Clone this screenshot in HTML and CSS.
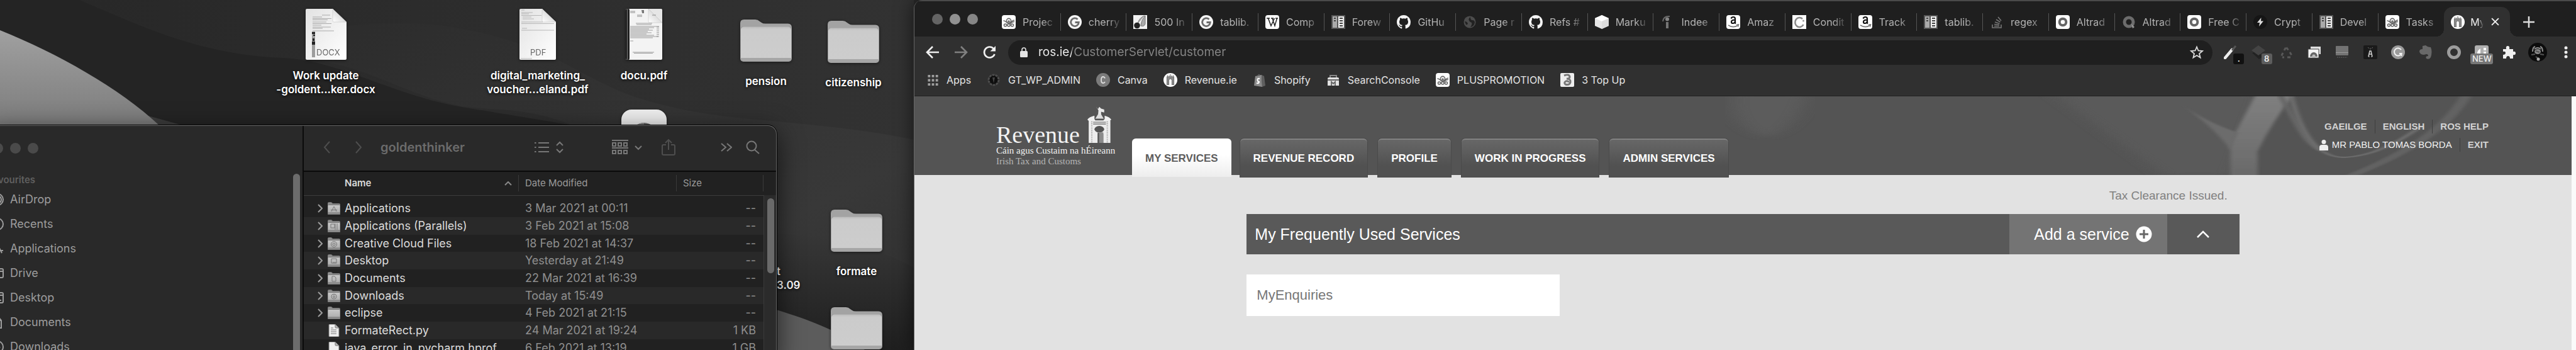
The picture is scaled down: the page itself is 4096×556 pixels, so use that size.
FILE: index.html
```
<!DOCTYPE html>
<html lang="en">
<head>
<meta charset="utf-8">
<title>My Services</title>
<link rel="stylesheet" href="styles.css">
</head>
<body>
<svg class="defs" aria-hidden="true">
  <defs>
    <linearGradient id="paper" x1="0" y1="0" x2="1" y2="1"><stop offset="0" stop-color="#e2e2e2"/><stop offset="1" stop-color="#fff"/></linearGradient>
    <linearGradient id="fold" x1="0" y1="1" x2="1" y2="0"><stop offset="0" stop-color="#fff"/><stop offset=".6" stop-color="#d8d8d8"/></linearGradient>
    <linearGradient id="front" x1="0" y1="0" x2="0" y2="1"><stop offset="0" stop-color="#bdbdbd"/><stop offset=".08" stop-color="#cbcbcb"/><stop offset="1" stop-color="#cdcdcd"/></linearGradient>
    <linearGradient id="mini" x1="0" y1="0" x2="0" y2="1"><stop offset="0" stop-color="#c9c9c9"/><stop offset="1" stop-color="#a9a9a9"/></linearGradient>
  </defs>
  <symbol id="folder" viewBox="0 0 82 68">
    <path d="M0 60V7Q0 1 6 1H24Q28 1 31 4L34 6Q36 7.500 40 7.500H76Q82 7.500 82 14V60Z" fill="#a3a3a3"/>
    <rect x="0" y="12" width="82" height="56" rx="5" fill="#9d9d9d"/>
    <rect x="1" y="12.500" width="80" height="54" rx="5" fill="url(#front)"/>
    <path d="M1 62H81Q81 67 76 67H6Q1 67 1 62Z" fill="#a6a6a6"/>
  </symbol>
  <symbol id="mini-folder" viewBox="0 0 20 19">
    <path d="M0 4V2Q0 0 2 0H6L8 2H18Q20 2 20 4V6H0Z" fill="#8d8d8d"/>
    <rect y="4" width="20" height="15" rx="1.500" fill="url(#mini)"/>
    <path d="M0 16.500H20V17.500Q20 19 18.500 19H1.500Q0 19 0 17.500Z" fill="#959595"/>
  </symbol>
  <symbol id="mini-file" viewBox="0 0 16 20"><path d="M0 1Q0 0 1 0H10L16 6V19Q16 20 15 20H1Q0 20 0 19Z" fill="#efefef"/><path d="M10 0L16 6H11Q10 6 10 5Z" fill="#b5b5b5"/></symbol>
  <symbol id="asana" viewBox="0 0 22 22"><rect width="22" height="22" rx="4" fill="#fff"/><g fill="none" stroke="#666" stroke-width="1.600"><circle cx="11" cy="9" r="3.600"/><circle cx="11" cy="10" r="1"/><path d="M2.500 9C7 8 8 15 12 13S16 8 20 8M13 14Q17 10 20 10.500"/><circle cx="5.500" cy="16" r="2"/><circle cx="11" cy="16" r="2"/><circle cx="16.500" cy="16" r="2"/></g></symbol>
  <symbol id="g" viewBox="0 0 22 22"><circle cx="11" cy="11" r="11" fill="#f6f6f6"/><path d="M15.500 6.800A6.300 6.300 0 1 0 17.300 11.500H11.500" fill="none" stroke="#6b6b6b" stroke-width="2.800"/></symbol>
  <symbol id="cherry" viewBox="0 0 22 22"><rect width="22" height="22" fill="#f2f2f2"/><path d="M18 1C12 3 8 8 7 14M19 1Q12 9 12 17Q17 19 19 14Z" fill="#aaa" stroke="#777"/><circle cx="6" cy="16.500" r="4.800" fill="#222"/></symbol>
  <symbol id="wiki" viewBox="0 0 22 22"><rect width="22" height="22" rx="4" fill="#fff"/><path d="M2 5H7M9 5H13M16 5H20M4.500 5L9 17L14.500 5M11 5L15 17L18.500 5" fill="none" stroke="#222" stroke-width="1.500"/></symbol>
  <symbol id="docs" viewBox="0 0 22 22"><rect width="22" height="22" fill="#555"/><rect x="2" y="2" width="7" height="18" fill="#aaa"/><rect x="11" y="2" width="9" height="18" fill="#eee"/><path d="M4 5h3M4 9h3M13 5h5M13 9h5M13 13h5M13 17h5" stroke="#444" stroke-width="2"/></symbol>
  <symbol id="github" viewBox="0 0 16 16"><path fill="#f4f4f4" d="M8 0C3.580 0 0 3.580 0 8c0 3.540 2.290 6.530 5.470 7.590.4.070.55-.17.55-.38 0-.19-.01-.82-.01-1.490-2.010.37-2.530-.49-2.690-.94-.09-.23-.48-.94-.82-1.130-.28-.15-.68-.52-.01-.53.63-.01 1.080.58 1.230.82.72 1.210 1.870.87 2.330.66.07-.52.28-.87.51-1.070-1.780-.2-3.640-.89-3.640-3.950 0-.87.31-1.590.82-2.150-.08-.2-.36-1.020.08-2.120 0 0 .67-.21 2.200.82a7.600 7.600 0 0 1 4 0c1.530-1.040 2.200-.82 2.200-.82.44 1.100.16 1.920.08 2.120.51.56.82 1.270.82 2.150 0 3.070-1.870 3.750-3.650 3.950.29.25.54.73.54 1.480 0 1.070-.01 1.930-.01 2.200 0 .21.15.46.55.38A8 8 0 0 0 16 8c0-4.420-3.580-8-8-8z"/></symbol>
  <symbol id="globe" viewBox="0 0 22 22"><circle cx="11" cy="11" r="9.500" fill="#4c4c4c"/><path d="M12 3Q8 6 10 9T14 12Q15 15 12 19Q18 18 19 12Q19 8 15 8Q12 8 12 3ZM3 10Q7 10 8 14Q6 16 5 15Z" fill="#222"/></symbol>
  <symbol id="cube" viewBox="0 0 22 22"><path d="M11 0L22 5V17L11 22L0 17V5Z" fill="#e6e6e6"/><path d="M11 0L22 5L11 10L0 5Z" fill="#fff"/><path d="M11 10V22L22 17V5Z" fill="#dcdcdc"/></symbol>
  <symbol id="indeed" viewBox="0 0 22 22"><path d="M4 10Q5 1 15 2" fill="none" stroke="#6a6a6a" stroke-width="2"/><circle cx="11" cy="6.500" r="3" fill="#858585"/><path d="M11 11V21" stroke="#757575" stroke-width="4"/></symbol>
  <symbol id="amazon" viewBox="0 0 22 22"><rect width="22" height="22" rx="4" fill="#fff"/><path d="M7.500 5.500Q8.500 3 11 3Q14 3 14 6V11.500Q14 13 15 13.500M14 7.500Q8 7.500 8 10.700Q8 13 10.300 13Q14 13 14 9" fill="none" stroke="#111" stroke-width="2.200"/><path d="M3 16Q11 21 18 16.500M16 15.500L19.500 15L18.500 18.500" fill="none" stroke="#777" stroke-width="1.600"/></symbol>
  <symbol id="cring" viewBox="0 0 22 22"><rect width="22" height="22" fill="#fff"/><path d="M16 6A7 7.500 0 1 0 17.500 15" fill="none" stroke="#8a8a8a" stroke-width="2.600"/><circle cx="17.500" cy="9" r="1.500" fill="#999"/></symbol>
  <symbol id="stack" viewBox="0 0 22 22"><path d="M4 15V20H18V15M7 17.500H15M7 14.500L15 15.500M8 11L15.500 13.500M10 7L16.500 11M13 3L18 9" fill="none" stroke="#777" stroke-width="1.600"/></symbol>
  <symbol id="ring-box" viewBox="0 0 22 22"><rect width="22" height="22" rx="4" fill="#fff"/><circle cx="11" cy="11" r="5.300" fill="none" stroke="#666" stroke-width="4"/></symbol>
  <symbol id="ring-dark" viewBox="0 0 22 22"><circle cx="11" cy="11" r="7" fill="none" stroke="#6c6c6c" stroke-width="5"/><path d="M15 14L20 19L17 21Z" fill="#999"/></symbol>
  <symbol id="bolt" viewBox="0 0 22 22"><circle cx="11" cy="11" r="11" fill="#151515"/><path d="M12.500 4L6 12H10L9 18L16 9.500H12Z" fill="#ddd"/></symbol>
  <symbol id="rev" viewBox="0 0 22 22"><circle cx="11" cy="11" r="11" fill="#fff"/><path d="M5.500 18.500V6H16.500V18.500H13.500V11Q11 7 8.500 11V18.500ZM6.500 3.500V6M9 4V6M11 2V6M13 4V6M15.500 3.500V6" fill="#8a8a8a" stroke="#777" stroke-width="1.200"/></symbol>
</svg>

<div class="desktop">
  <svg class="wallpaper" viewBox="0 0 1453 556" preserveAspectRatio="none" aria-hidden="true">
    <defs>
      <linearGradient id="hill" x1="0" y1="0" x2="0" y2="1"><stop offset="0" stop-color="#a0a0a0"/><stop offset="1" stop-color="#7c7c7c"/></linearGradient>
      <linearGradient id="band" x1="0" y1="0" x2="1" y2="1"><stop offset="0" stop-color="#2c2c2c"/><stop offset=".7" stop-color="#383838"/><stop offset="1" stop-color="#2e2e2e"/></linearGradient>
      <linearGradient id="low" x1="0" y1="0" x2="0" y2="1"><stop offset="0" stop-color="#373737"/><stop offset="1" stop-color="#1f1f1f"/></linearGradient>
      <linearGradient id="base" x1="0" y1="0" x2="1" y2="0"><stop offset="0" stop-color="#272727"/><stop offset="1" stop-color="#323232"/></linearGradient>
    </defs>
    <rect width="1453" height="556" fill="url(#base)"/>
    <path d="M126 0C220 40 320 88 450 92C540 96 620 150 734 170L910 199H0V0Z" fill="#242424"/>
    <path d="M490 50C590 32 680 34 734 46C900 75 930 140 1060 168C1160 195 1300 190 1453 222V556H1100L910 199C840 170 790 176 734 169C640 150 580 100 480 94Z" fill="url(#band)"/>
    <path d="M1234 370C1330 378 1400 396 1453 425V556H1234Z" fill="url(#low)"/>
    <path d="M1234 492C1300 512 1340 530 1375 556H1234Z" fill="#5c5c5c"/>
    <path d="M236 184L290 199H236Z" fill="#3c3c3c"/>
    <path d="M0 48C90 84 190 140 253 199H0Z" fill="url(#hill)"/>
  </svg>

  <figure class="item docx">
    <svg width="65" height="81" viewBox="0 0 65 81" role="img" aria-label="Word document">
      <path d="M0 2Q0 0 2 0H43L65 21V79Q65 81 63 81H2Q0 81 0 79Z" fill="url(#paper)"/>
      <path d="M43 0L65 21H45Q43 21 43 19Z" fill="url(#fold)" stroke="#bbb" stroke-width=".5"/>
      <path d="M26 10h13M11 13h15M11 15.500h30M11 17.500h24M11 21h22M11 23.500h30M11 26h14M11 29h29M11 31h16M11 35h34" stroke="#999" stroke-width=".8"/>
      <rect x="10" y="36" width="5" height="41" fill="#9d9d9d"/><path d="M10 37h5v3h-5zM12 41h3v2h-3zM11 47h3v4h-3zM10 52h5v5h-5z" fill="#222"/>
      <text x="17" y="74" class="doc-type">DOCX</text>
    </svg>
    <figcaption>Work update<br>-goldent...ker.docx</figcaption>
  </figure>
  <figure class="item marketing">
    <svg width="58" height="81" viewBox="0 0 58 81" role="img" aria-label="PDF document">
      <path d="M0 2Q0 0 2 0H36L58 21V79Q58 81 56 81H2Q0 81 0 79Z" fill="url(#paper)"/>
      <path d="M36 0L58 21H38Q36 21 36 19Z" fill="url(#fold)" stroke="#bbb" stroke-width=".5"/>
      <path d="M3 2h5M3 6h18M3 8h12M3 10.500h32M5 13h14M5 16h18M3 21h34M3 23.500h52M4 31h8M3 34h52M2 79h18" stroke="#aaa" stroke-width=".8"/>
      <text x="17" y="74" class="doc-type">PDF</text>
    </svg>
    <figcaption>digital_marketing_<br>voucher...eland.pdf</figcaption>
  </figure>
  <figure class="item docu">
    <svg width="58" height="81" viewBox="0 0 58 81" role="img" aria-label="PDF document">
      <rect width="58" height="81" rx="2" fill="#f3f3f3"/><rect width="6" height="81" rx="2" fill="#222"/><rect x="2" width="1" height="81" fill="#777"/>
      <path d="M36 0H56L58 2V22L44 22Q36 22 36 19Z" fill="#e6e6e6"/><path d="M36 0L58 22H38Q36 22 36 20Z" fill="url(#fold)" stroke="#bbb" stroke-width=".5"/>
      <path d="M25 2h4v5h-3z" fill="#777"/><path d="M16 23h26M17 25h24M7 28h46M7 30h38M7 32h30M7 34h36M7 36h28M7 38h34M7 40h26M7 42h38M7 44h44M7 46h36M7 51h5M11 69h34M13 70.500h30" stroke="#888" stroke-width=".8"/>
      <path d="M49 29h4M49 32h4M49 35h4M49 38h4M49 41h4M49 44h4M7 4h8M7 6h8M18 10h8M18 12h8M42 10h6" stroke="#777" stroke-width=".8"/>
    </svg>
    <figcaption>docu.pdf</figcaption>
  </figure>
  <div class="item app">
    <svg width="72" height="80" viewBox="0 0 72 80" role="img" aria-label="Application"><rect width="72" height="80" rx="16" fill="#efefef"/><circle cx="36" cy="41" r="20" fill="#6a6a6a"/><path d="M36 21A20 20 0 0 0 36 61Z" fill="#8f8f8f"/></svg>
  </div>
  <figure class="item pension"><svg width="82" height="68" aria-hidden="true"><use href="#folder"/></svg><figcaption>pension</figcaption></figure>
  <figure class="item citizenship"><svg width="82" height="68" aria-hidden="true"><use href="#folder"/></svg><figcaption>citizenship</figcaption></figure>
  <figure class="item formate"><svg width="82" height="68" aria-hidden="true"><use href="#folder"/></svg><figcaption>formate</figcaption></figure>
  <figure class="item last"><svg width="82" height="68" aria-hidden="true"><use href="#folder"/></svg></figure>
  <p class="item covered">t<br>3.09</p>
</div>

<section class="finder" aria-label="Finder">
  <aside class="sidebar">
    <div class="side-main">
      <div class="lights"><i></i><i></i><i></i></div>
      <h2>Favourites</h2>
      <ul>
        <li><svg viewBox="0 0 20 20"><circle cx="10" cy="10" r="9"/><circle cx="10" cy="10" r="6"/><circle cx="10" cy="10" r="3"/></svg><a href="#">AirDrop</a></li>
        <li><svg viewBox="0 0 20 20"><circle cx="10" cy="10" r="9"/><path d="M10 4V10H6"/></svg><a href="#">Recents</a></li>
        <li><svg viewBox="0 0 20 20"><path d="M3 17L10 3L17 17M1 13H19"/></svg><a href="#">Applications</a></li>
        <li><svg viewBox="0 0 20 20"><rect x="2" y="3" width="17" height="14" rx="2"/><path d="M2 7H19"/></svg><a href="#">Drive</a></li>
        <li><svg viewBox="0 0 20 20"><rect x="1" y="2" width="18" height="16" rx="2"/><path d="M2 6H19M5 14H16"/></svg><a href="#">Desktop</a></li>
        <li><svg viewBox="0 0 20 20"><path d="M3 1H11L16 7V19H3ZM11 1V7H16"/></svg><a href="#">Documents</a></li>
        <li><svg viewBox="0 0 20 20"><circle cx="10" cy="10" r="9"/><path d="M10 5V14M6 10L10 14L14 10"/></svg><a href="#">Downloads</a></li>
      </ul>
    </div>
    <div class="side-scroll"></div>
  </aside>
  <div class="files">
    <header class="finder-bar">
      <button class="back" aria-label="Back"><svg width="12" height="20" viewBox="0 0 12 20"><path d="M10 1L2 10L10 19"/></svg></button>
      <button class="forward" aria-label="Forward"><svg width="12" height="20" viewBox="0 0 12 20"><path d="M2 1L10 10L2 19"/></svg></button>
      <h1>goldenthinker</h1>
      <button class="view" aria-label="View as list"><svg width="46" height="20" viewBox="0 0 46 20"><path d="M6 3H23M6 10H23M6 17H23M0 3H2.500M0 10H2.500M0 17H2.500M35 7L40 2L45 7M35 13L40 18L45 13"/></svg></button>
      <button class="group" aria-label="Group"><svg width="48" height="24" viewBox="0 0 48 24"><path d="M0 1H26M0 13H26M1 5h5v5h-5zM10 5h5v5h-5zM19 5h5v5h-5zM1 17h5v5h-5zM10 17h5v5h-5zM19 17h5v5h-5zM37 10L42 15L47 10"/></svg></button>
      <button class="share" aria-label="Share"><svg width="22" height="26" viewBox="0 0 22 26"><path d="M7 9H3Q1 9 1 11V23Q1 25 3 25H19Q21 25 21 23V11Q21 9 19 9H15M11 17V1M6 6L11 1L16 6"/></svg></button>
      <button class="more" aria-label="More"><svg width="18" height="14" viewBox="0 0 18 14"><path d="M1 1L8 7L1 13M10 1L17 7L10 13"/></svg></button>
      <button class="find" aria-label="Search"><svg width="22" height="22" viewBox="0 0 22 22"><circle cx="9" cy="9" r="7.500"/><path d="M14 15L21 21"/></svg></button>
    </header>
    <div class="list">
      <table>
        <colgroup><col class="c-name"><col class="c-date"><col class="c-size"></colgroup>
        <thead><tr><th scope="col"><span class="sort">Name<svg width="12" height="7" viewBox="0 0 12 7"><path d="M1 6L6 1L11 6"/></svg></span></th><th scope="col">Date Modified</th><th scope="col">Size</th></tr></thead>
        <tbody>
          <tr><td><span class="entry"><svg class="tri"><use href="#tri"/></svg><svg class="ico"><use href="#mini-folder"/><path d="M6 15L10 7L14 15M5 12.500H15"/></svg>Applications</span></td><td>3 Mar 2021 at 00:11</td><td>--</td></tr>
          <tr><td><span class="entry"><svg class="tri"><use href="#tri"/></svg><svg class="ico"><use href="#mini-folder"/><path d="M5 7H11V13H5ZM12 6V16M15 6V16"/></svg>Applications (Parallels)</span></td><td>3 Feb 2021 at 15:08</td><td>--</td></tr>
          <tr><td><span class="entry"><svg class="tri"><use href="#tri"/></svg><svg class="ico"><use href="#mini-folder"/><circle cx="10" cy="11" r="4.500"/><circle cx="10" cy="11" r="2"/></svg>Creative Cloud Files</span></td><td>18 Feb 2021 at 14:37</td><td>--</td></tr>
          <tr><td><span class="entry"><svg class="tri"><use href="#tri"/></svg><svg class="ico"><use href="#mini-folder"/><path d="M6 7H14V14H6ZM8 13H13"/></svg>Desktop</span></td><td>Yesterday at 21:49</td><td>--</td></tr>
          <tr><td><span class="entry"><svg class="tri"><use href="#tri"/></svg><svg class="ico"><use href="#mini-folder"/><path d="M7 7H11L13 9V15H7Z"/></svg>Documents</span></td><td>22 Mar 2021 at 16:39</td><td>--</td></tr>
          <tr><td><span class="entry"><svg class="tri"><use href="#tri"/></svg><svg class="ico"><use href="#mini-folder"/><circle cx="10" cy="11" r="4"/><path d="M10 8V13M8 11L10 13L12 11"/></svg>Downloads</span></td><td>Today at 15:49</td><td>--</td></tr>
          <tr><td><span class="entry"><svg class="tri"><use href="#tri"/></svg><svg class="ico"><use href="#mini-folder"/></svg>eclipse</span></td><td>4 Feb 2021 at 21:15</td><td>--</td></tr>
          <tr><td><span class="entry"><svg class="tri"></svg><svg class="ico"><use href="#mini-file"/><path d="M5 6H9M5 9H14M5 12H14M5 15H14"/></svg>FormateRect.py</span></td><td>24 Mar 2021 at 19:24</td><td>1 KB</td></tr>
          <tr><td><span class="entry"><svg class="tri"></svg><svg class="ico"><use href="#mini-file"/></svg>java_error_in_pycharm.hprof</span></td><td>6 Feb 2021 at 13:19</td><td>1 GB</td></tr>
        </tbody>
      </table>
      <div class="track"><div class="thumb"></div></div>
    </div>
  </div>
  <svg class="defs" aria-hidden="true"><symbol id="tri" viewBox="0 0 8 14"><path d="M1 1L7 7L1 13" fill="none" stroke="#9a9a9a" stroke-width="2"/></symbol></svg>
</section>

<section class="browser" aria-label="Browser">
  <div class="tabstrip">
    <div class="lights"><i></i><i></i><i></i></div>
    <div class="tabs">
      <button class="tab"><svg><use href="#asana"/></svg><span>Projec</span></button>
      <button class="tab"><svg><use href="#g"/></svg><span>cherry</span></button>
      <button class="tab"><svg><use href="#cherry"/></svg><span>500 In</span></button>
      <button class="tab"><svg><use href="#g"/></svg><span>tablib.</span></button>
      <button class="tab"><svg><use href="#wiki"/></svg><span>Comp</span></button>
      <button class="tab"><svg><use href="#docs"/></svg><span>Forew</span></button>
      <button class="tab"><svg><use href="#github"/></svg><span>GitHu</span></button>
      <button class="tab"><svg><use href="#globe"/></svg><span>Page r</span></button>
      <button class="tab"><svg><use href="#github"/></svg><span>Refs #</span></button>
      <button class="tab"><svg><use href="#cube"/></svg><span>Marku</span></button>
      <button class="tab"><svg><use href="#indeed"/></svg><span>Indee</span></button>
      <button class="tab"><svg><use href="#amazon"/></svg><span>Amaz</span></button>
      <button class="tab"><svg><use href="#cring"/></svg><span>Condit</span></button>
      <button class="tab"><svg><use href="#amazon"/></svg><span>Track</span></button>
      <button class="tab"><svg><use href="#docs"/></svg><span>tablib.</span></button>
      <button class="tab"><svg><use href="#stack"/></svg><span>regex</span></button>
      <button class="tab"><svg><use href="#ring-box"/></svg><span>Altrad</span></button>
      <button class="tab"><svg><use href="#ring-dark"/></svg><span>Altrad</span></button>
      <button class="tab"><svg><use href="#ring-box"/></svg><span>Free C</span></button>
      <button class="tab"><svg><use href="#bolt"/></svg><span>Crypt</span></button>
      <button class="tab"><svg><use href="#docs"/></svg><span>Devel</span></button>
      <button class="tab"><svg><use href="#asana"/></svg><span>Tasks</span></button>
      <button class="tab active"><svg><use href="#rev"/></svg><span>My</span><svg class="close" viewBox="0 0 22 22"><path d="M4 4L18 18M18 4L4 18" stroke="#eee" stroke-width="2.500"/></svg></button>
    </div>
    <button class="new-tab" aria-label="New tab"><svg width="18" height="18" viewBox="0 0 18 18"><path d="M9 0V18M0 9H18" stroke="#ddd" stroke-width="2.500"/></svg></button>
  </div>

  <div class="toolbar">
    <div class="nav-buttons">
      <button aria-label="Back"><svg viewBox="0 0 22 22"><path d="M21 11H3M11 2L2 11L11 20" stroke="#f0f0f0" stroke-width="2.600" fill="none"/></svg></button>
      <button aria-label="Forward"><svg viewBox="0 0 22 22"><path d="M1 11H19M11 2L20 11L11 20" stroke="#808080" stroke-width="2.600" fill="none"/></svg></button>
      <button aria-label="Reload"><svg viewBox="0 0 22 22"><path d="M18 5.500A8.500 8.500 0 1 0 19.500 14" stroke="#f0f0f0" stroke-width="2.600" fill="none"/><path d="M21 1V9.500H12.500Z" fill="#f0f0f0"/></svg></button>
    </div>
    <div class="omnibox">
      <svg class="lock" width="12" height="16" viewBox="0 0 12 16" aria-hidden="true"><rect y="6" width="12" height="10" rx="1.500" fill="#e4e4e4"/><path d="M3 7V4Q3 1 6 1T9 4V7" fill="none" stroke="#e4e4e4" stroke-width="1.600"/></svg>
      <input type="text" aria-label="Address" value="ros.ie/CustomerServlet/customer">
      <button aria-label="Bookmark this page"><svg width="22" height="22" viewBox="0 0 22 22"><path d="M11 2.500L13.500 8.500L20 9L15 13.300L16.600 19.500L11 16L5.400 19.500L7 13.300L2 9L8.500 8.500Z" fill="none" stroke="#ddd" stroke-width="1.800"/></svg></button>
    </div>
    <div class="extensions">
      <button aria-label="Colour picker"><svg viewBox="0 0 22 22"><path d="M2 20L13 7" stroke="#eee" stroke-width="4.500" stroke-linecap="round"/><path d="M13 8L19 1" stroke="#555" stroke-width="3"/></svg><b class="dot">.</b></button>
      <button aria-label="Layers"><svg viewBox="0 0 22 22"><path d="M1 12L9 9L18 18L12 22Z" fill="#222"/><path d="M11 0L22 8L11 16L0 8Z" fill="#444"/></svg><b class="count">8</b></button>
      <button aria-label="Recycle"><svg viewBox="0 0 22 22"><path d="M7 8L10 3L14 8M16 11L19 16M5 12L2 18M7 19H4M12 19H17" stroke="#585858" stroke-width="3" stroke-dasharray="5 1.500" fill="none"/></svg></button>
      <button aria-label="Screenshots"><svg viewBox="0 0 22 22"><path d="M5 2H21V14H5Z" fill="#ddd"/><path d="M1 6H18V20H1Z" fill="#f4f4f4" stroke="#444"/><path d="M4 18A6 7 0 0 1 16 18Z" fill="#666"/><circle cx="10" cy="17" r="2.500" fill="#bbb"/></svg></button>
      <button aria-label="Analytics"><svg viewBox="0 0 22 22"><rect x="1" y="1" width="20" height="15" rx="1" fill="#737373"/><path d="M1 11.500H21" stroke="#999"/><path d="M3 19H19" stroke="#4a4a4a" stroke-width="2" stroke-dasharray="2 1"/></svg></button>
      <button aria-label="Tower"><svg viewBox="0 0 22 22"><rect width="22" height="22" rx="2" fill="#1a1a1a"/><path d="M8 18L10 9H12L14 18M8 18H9.500M12.500 18H14M9 14H13" stroke="#ccc" stroke-width="1.600" fill="none"/><path d="M7 3L9 5M15 3L13 5M11 4V7" stroke="#666"/></svg></button>
      <button aria-label="Grammar"><svg viewBox="0 0 22 22"><circle cx="11" cy="11" r="11" fill="#9b9b9b"/><path d="M16 7A6 6 0 1 0 16.500 13H13M16.500 13V17" fill="none" stroke="#f2f2f2" stroke-width="2"/></svg></button>
      <button aria-label="Notes"><svg viewBox="0 0 22 22"><path d="M6 1L11 0Q14 3 19 3Q22 10 19 19Q17 23 12 21Q10 17 15 17Q15 14 12 14Q3 17 1 10Q1 6 6 6Z" fill="#686868"/></svg></button>
      <button aria-label="Ring"><svg viewBox="0 0 22 22"><circle cx="11" cy="11" r="8.500" fill="none" stroke="#9c9c9c" stroke-width="5"/></svg></button>
      <button aria-label="New feature"><svg viewBox="0 0 22 22"><rect width="22" height="22" rx="3" fill="#b0b0b0"/><path d="M9 3V14M4 13Q4 8 9 5V14ZM14 4H18V8H14ZM14 10H18V14H14Z" fill="#fff"/></svg><b class="new">NEW</b></button>
      <button aria-label="Extensions"><svg viewBox="0 0 22 22"><path d="M1 6H6Q5 1 8.500 1T11 6H17V10Q21 9 21 12.500T17 15V21H12Q12 17 9 17T6 21H1V15Q5 15 5 12T1 10Z" fill="#f0f0f0"/></svg></button>
      <button class="avatar" aria-label="Profile"><svg viewBox="0 0 30 30"><circle cx="15" cy="15" r="15" fill="#0c0c0c"/><path d="M7 14Q7 7 11 6M23 14Q23 7 19 6M10 10Q15 6 20 10" fill="none" stroke="#8e8e8e" stroke-width="2"/><ellipse cx="15" cy="14" rx="5" ry="4" fill="#8a8a8a"/><path d="M12 13L18 15M5 19L11 18M25 19L19 18M12 22L18 26" stroke="#555" stroke-width="2"/><circle cx="16" cy="26" r="2.500" fill="#aaa"/></svg></button>
    </div>
    <button class="menu" aria-label="Menu"><svg width="6" height="20" viewBox="0 0 6 20"><g fill="#eee"><circle cx="3" cy="3" r="2.500"/><circle cx="3" cy="10" r="2.500"/><circle cx="3" cy="17" r="2.500"/></g></svg></button>
  </div>

  <nav class="bookmarks" aria-label="Bookmarks">
    <a class="apps" href="#"><svg viewBox="0 0 18 20"><path d="M2.500 1V19M9 1V19M15.500 1V19" stroke="#a0a0a0" stroke-width="4" stroke-dasharray="4 3"/></svg>Apps</a>
    <a href="#"><svg viewBox="0 0 22 22"><circle cx="11" cy="11" r="8" fill="#0e0e0e" stroke="#4c4c4c" stroke-width="3" stroke-dasharray="4 1"/><path d="M9 7H13L11 16Z" fill="#444"/></svg>GT_WP_ADMIN</a>
    <a href="#"><svg viewBox="0 0 22 22"><circle cx="11" cy="11" r="11" fill="#7b7b7b"/><path d="M14 8.500Q13 6 11 6Q8 6 8 11T11 16Q13 16 14 14" fill="none" stroke="#ddd" stroke-width="1.800"/></svg>Canva</a>
    <a href="#"><svg><use href="#rev"/></svg>Revenue.ie</a>
    <a href="#"><svg viewBox="0 0 22 22"><path d="M4 5L14 3L15 22L2 20Z" fill="#8a8a8a"/><path d="M14 3L18 5L20 20L15 22Z" fill="#5f5f5f"/><path d="M7 6Q9 0 12 4" fill="none" stroke="#777"/><path d="M11 9Q7 8 7.500 11T10 14Q10 17 6 16" fill="none" stroke="#fff" stroke-width="2"/></svg>Shopify</a>
    <a href="#"><svg viewBox="0 0 22 22"><path d="M6 7V4H16V7" fill="none" stroke="#888" stroke-width="2"/><path d="M2 9Q2 7 4 7H18Q20 7 20 9V20H2Z" fill="#e2e2e2"/><path d="M2 11H20M8 20V14L11 17L14 14V20" stroke="#666" stroke-width="1.800" fill="none"/></svg>SearchConsole</a>
    <a href="#"><svg><use href="#asana"/></svg>PLUSPROMOTION</a>
    <a href="#"><svg viewBox="0 0 22 22"><rect width="22" height="22" rx="2" fill="#eee"/><path d="M6 4Q14 1 15 6Q15 9 10 9Q17 9 16 15Q14 20 8 18Q5 15 9 13Q13 12 13 15" fill="none" stroke="#777" stroke-width="3"/></svg>3 Top Up</a>
  </nav>

  <div class="page">
    <header class="site-head">
      <svg class="waves" viewBox="0 20 1563 541" preserveAspectRatio="none" aria-hidden="true">
        <defs><filter id="soft"><feGaussianBlur stdDeviation="14"/></filter><filter id="fine"><feGaussianBlur stdDeviation="3"/></filter>
        <linearGradient id="trunk" x1="0" y1="0" x2="0" y2="1"><stop offset="0" stop-color="#808080"/><stop offset="1" stop-color="#6a6a6a"/></linearGradient></defs>
        <path d="M200 0H320Q300 260 250 300Q190 200 200 0Z" fill="#5b5b5b" filter="url(#soft)"/>
        <path d="M720 0H1060L1010 561H900Z" fill="#5a5a5a" filter="url(#soft)"/>
        <path d="M1050 0H1112Q1075 200 1052 400V561H1008V400Q1005 330 1020 240Z" fill="url(#trunk)" filter="url(#fine)"/>
        <path d="M930 80Q965 190 1020 270L1008 390Q985 250 930 80Z" fill="#6c6c6c" filter="url(#fine)"/>
        <path d="M1090 20C1115 200 1125 330 1155 395" fill="none" stroke="#666" stroke-width="9" filter="url(#fine)"/>
        <path d="M1106 10C1118 200 1140 440 1193 440C1250 430 1290 300 1318 230" fill="none" stroke="#6f6f6f" stroke-width="8" filter="url(#fine)"/>
        <path d="M1202 570C1270 450 1350 300 1392 10" fill="none" stroke="#626262" stroke-width="18" filter="url(#fine)"/>
      </svg>
      <a class="logo" href="#" aria-label="Revenue">
        <span class="logo-top"><span class="word">Revenue</span>
        <svg width="38" height="58" viewBox="0 0 54 83" preserveAspectRatio="none" aria-hidden="true">
          <path d="M20 1L24 6L27 1L31 5L38 7V14L31 12L31 21H24L25 9Z" fill="#e8e8e8"/>
          <path d="M24 18H31L37 28H18Z" fill="#ddd"/><path d="M0 30Q4 24 16 21V29L18 32H36L39 29V21Q50 24 54 30L50 34H4Z" fill="#f0f0f0"/>
          <path d="M3 33H52V83H36V62H23V83H3Z" fill="#ececec"/><ellipse cx="27" cy="52" rx="11" ry="7.500" fill="#545454"/>
          <path d="M13 36H42M13 40H42" stroke="#777" stroke-width="2"/><path d="M10 34V83M45 34V83" stroke="#aaa" stroke-dasharray="2 2" stroke-width="3"/>
          <path d="M23 59V83H36V59Z" fill="#8a8a8a"/><path d="M25 60V83" stroke="#545454" stroke-width="3"/>
        </svg></span>
        <span class="irish">Cáin agus Custaim na hÉireann</span>
        <span class="english">Irish Tax and Customs</span>
      </a>
      <nav class="main-nav" aria-label="Main">
        <a class="current" href="#">MY SERVICES</a><a href="#">REVENUE RECORD</a><a href="#">PROFILE</a><a href="#">WORK IN PROGRESS</a><a href="#">ADMIN SERVICES</a>
      </nav>
      <div class="account">
        <div class="links"><a href="#">GAEILGE</a><a href="#">ENGLISH</a><a href="#">ROS HELP</a></div>
        <div class="links"><span class="user"><svg width="14" height="17" viewBox="0 0 14 17" aria-hidden="true"><circle cx="7" cy="3.500" r="3.500" fill="#eee"/><path d="M0 17V12Q0 8 4 8H10Q14 8 14 12V17Z" fill="#eee"/></svg>MR PABLO TOMAS BORDA</span><a href="#">EXIT</a></div>
      </div>
    </header>
    <main>
      <p class="notice">Tax Clearance Issued.</p>
      <div class="service-bar">
        <h2>My Frequently Used Services</h2>
        <button class="add">Add a service <svg width="26" height="26" viewBox="0 0 26 26" aria-hidden="true"><circle cx="13" cy="13" r="12.500" fill="#fff"/><path d="M13 6V20M6 13H20" stroke="#666" stroke-width="3"/></svg></button>
        <button class="fold" aria-label="Collapse"><svg width="20" height="12" viewBox="0 0 20 12"><path d="M1 11L10 2L19 11" fill="none" stroke="#fff" stroke-width="2.500"/></svg></button>
      </div>
      <a class="card" href="#">MyEnquiries</a>
    </main>
  </div>
</section>
</body>
</html>
```
FILE: styles.css
```
* { box-sizing: border-box; }
body { margin: 0; height: 100vh; overflow: hidden; position: relative; background: #2a2a2a; font-family: Inter, "Liberation Sans", sans-serif; }
button { border: 0; padding: 0; background: none; color: inherit; font: inherit; display: flex; align-items: center; justify-content: center; }
a { color: inherit; text-decoration: none; }
h1, h2, p, ul, figure { margin: 0; padding: 0; }
.defs { position: absolute; width: 0; height: 0; }

/* desktop */
.desktop { position: absolute; inset: 0; }
.wallpaper { position: absolute; left: 0; top: 0; width: 1453px; height: 100%; }
.item { position: absolute; width: 180px; display: flex; flex-direction: column; align-items: center; gap: 20px; color: #fff; font-size: 17px; font-weight: 600; line-height: 22px; text-align: center; text-shadow: 0 1px 4px #000; }
.item svg { display: block; filter: drop-shadow(0 1px 2px #0008); }
.doc-type { font-size: 13px; font-weight: 400; fill: #666; text-shadow: none; }
.docx, .marketing, .docu { top: 14px; gap: 14px; }
.docx { left: 428px; }
.marketing { left: 765px; }
.docu { left: 934px; }
.app { left: 934px; top: 174px; }
.pension { left: 1128px; top: 30px; }
.citizenship { left: 1267px; top: 32px; }
.formate { left: 1272px; top: 332px; }
.last { left: 1272px; top: 487px; }
.covered { left: 1235px; top: 420px; width: auto; display: block; text-align: left; }

/* finder */
.finder { position: absolute; left: -20px; top: 199px; bottom: -20px; width: 1255px; display: flex; overflow: hidden; background: #292929; border-top: 1px solid #6a6a6a; border-right: 1px solid #6a6a6a; border-radius: 0 14px 0 0; box-shadow: 0 0 0 1px #000, 0 10px 40px #000a; }
.sidebar { flex: none; width: 503px; display: flex; justify-content: space-between; color: #9d9d9d; border-right: 2px solid #0a0a0a; }
.lights { display: flex; }
.finder .lights { gap: 11px; padding: 27px 0 0 8px; }
.lights i { width: 17px; height: 17px; border-radius: 50%; background: #4a4a4a; }
.sidebar h2 { margin-top: 32px; font-size: 15px; line-height: 20px; font-weight: 600; color: #5f5f5f; }
.sidebar ul { list-style: none; margin-top: 1px; }
.sidebar li { display: flex; align-items: center; gap: 10px; height: 39px; padding-left: 6px; font-size: 18px; }
.sidebar li svg { width: 20px; height: 20px; fill: none; stroke: #9d9d9d; stroke-width: 2; }
.side-scroll { width: 11px; margin: 76px 4px 0 0; border-radius: 6px 6px 0 0; background: #6c6c6c; }
.files { flex: 1; min-width: 0; display: flex; flex-direction: column; }
.finder-bar { display: flex; align-items: center; height: 73px; padding: 0 26px 3px 31px; border-bottom: 2px solid #0a0a0a; }
.finder-bar svg { fill: none; stroke: #777; stroke-width: 2; }
.finder-bar h1 { flex: 1; font-size: 20px; font-weight: 600; color: #6b6b6b; }
.back, .forward { margin-right: 38px; }
.forward { margin-right: 29px; }
.finder-bar .back svg, .finder-bar .forward svg, .finder-bar .share svg { stroke: #4e4e4e; }
.view { margin-right: 77px; }
.group { margin-right: 31px; }
.share { margin-right: 72px; }
.more { margin-right: 22px; }
.list { flex: 1; display: flex; background: #212121; }
table { flex: none; width: 731px; border-collapse: collapse; table-layout: fixed; align-self: flex-start; font-size: 18px; line-height: 22px; color: #8f8f8f; }
.c-name { width: 342px; }
.c-date { width: 251px; }
th { height: 37px; padding: 0 10px; font-size: 15px; font-weight: 400; text-align: left; color: #9a9a9a; border-bottom: 1px solid #3d3d3d; background: linear-gradient(#3a3a3a, #3a3a3a) right 5px / 1px 26px no-repeat; }
th:first-child { padding: 0 11px 0 65px; font-weight: 600; color: #d9d9d9; }
.sort { display: flex; justify-content: space-between; align-items: center; }
.sort svg { fill: none; stroke: #888; stroke-width: 2; }
tbody::before { content: ""; display: table-row; height: 7px; }
td { height: 28px; padding: 0 10px; white-space: nowrap; overflow: hidden; }
tr:nth-child(3n) td { height: 27px; }
tbody tr:nth-child(even) { background: #292929; }
td:first-child { padding-left: 22px; color: #dcdcdc; }
td:last-child { text-align: right; padding-right: 12px; }
.entry { display: flex; align-items: center; }
.tri { flex: none; width: 8px; height: 14px; margin-right: 8px; }
.ico { flex: none; width: 20px; height: 20px; margin-right: 7px; fill: none; stroke: #777; stroke-width: 1; }
.track { flex: 1; margin-top: 37px; padding: 5px 3px 0 5px; background: #2b2b2b; border-left: 1px solid #3a3a3a; }
.thumb { height: 119px; width: 11px; border-radius: 6px; background: #6a6a6a; }

/* browser */
.browser { position: absolute; left: 1453px; right: 0; top: 0; bottom: 0; display: flex; flex-direction: column; overflow: hidden; background: #303030; color: #e4e4e4; font-size: 16px; border-left: 1px solid #666; border-radius: 14px 0 0 0; box-shadow: 0 0 30px #0009; }
.tabstrip { flex: none; height: 58px; display: flex; align-items: flex-end; background: #1f1f1f; border-top: 2px solid #4a4a4a; }
.browser .lights { flex: none; align-self: center; width: 128px; padding: 0 0 0 28px; gap: 11px; }
.browser .lights i { background: #646464; }
.browser .lights i:nth-child(2) { background: #919191; }
.browser .lights i:nth-child(3) { background: #868686; }
.tabs { flex: 1 1 0; min-width: 0; display: grid; grid-template-columns: repeat(23, minmax(0, 1fr)); }
.tab { min-width: 0; height: 47px; padding-left: 11px; gap: 11px; justify-content: flex-start; color: #b4b4b4; }
.tab svg { flex: none; width: 22px; height: 22px; }
.tab span { flex: 1; min-width: 0; overflow: hidden; white-space: nowrap; text-align: left; -webkit-mask-image: linear-gradient(90deg, #000 55%, transparent 95%); mask-image: linear-gradient(90deg, #000 55%, transparent 95%); }
.tab::after { content: ""; flex: none; width: 1px; height: 28px; margin-left: -9px; background: #555; }
.tab:nth-last-child(2)::after { background: none; }
.tab.active { position: relative; gap: 9px; padding-right: 15px; background: #303030; border-radius: 14px 14px 0 0; color: #eee; }
.tab.active svg.close { width: 17px; height: 17px; }
.tab.active::before, .tab.active::after { content: ""; position: absolute; bottom: 0; margin: 0; width: 12px; height: 12px; background: radial-gradient(circle at 0 0, transparent 12px, #303030 12px); }
.tab.active::before { left: -12px; }
.tab.active::after { right: -12px; background: radial-gradient(circle at 100% 0, transparent 12px, #303030 12px); }
.new-tab { flex: none; width: 105px; height: 47px; padding-right: 45px; }
.toolbar { flex: none; display: flex; align-items: center; height: 50px; }
.nav-buttons { flex: none; display: flex; gap: 23px; padding: 0 19px 0 18px; }
.nav-buttons svg, .extensions svg { width: 22px; height: 22px; }
.omnibox { flex: 1; display: flex; align-items: center; height: 39px; padding: 0 14px 0 19px; border-radius: 20px; background: #1f1f1f; }
.omnibox input { flex: 1; min-width: 0; margin-left: 17px; padding: 0; border: 0; outline: 0; font: 19px/26px Inter, "Liberation Sans", sans-serif; color: transparent; background: linear-gradient(90deg, #f0f0f0 53px, #858585 53px); -webkit-background-clip: text; background-clip: text; }
.extensions { flex: none; width: 532px; margin-left: 7px; display: grid; grid-template-columns: repeat(12, 1fr); }
.extensions button { position: relative; height: 38px; }
.extensions .avatar svg { width: 30px; height: 30px; }
.extensions b { position: absolute; right: 1px; bottom: 0; min-width: 17px; height: 17px; border-radius: 3px; background: #5d5d5d; color: #eee; font-size: 13px; line-height: 17px; font-weight: 600; text-align: center; }
.extensions .dot { background: #111; }
.extensions .new { right: 4px; width: 36px; background: #777; font-weight: 500; }
.menu { flex: none; width: 39px; padding-left: 7px; }
.bookmarks { flex: none; display: flex; align-items: center; gap: 25px; height: 45px; padding: 0 0 6px 20px; border-bottom: 1px solid #222; }
.bookmarks a { display: flex; align-items: center; gap: 12px; white-space: nowrap; }
.bookmarks svg { width: 22px; height: 22px; }
.bookmarks .apps svg { width: 19px; height: 19px; }

/* revenue page */
.page { flex: 1; margin-right: 7px; background: #e2e2e2; box-shadow: 7px 0 #fafafa; font-family: "Liberation Sans", Arial, sans-serif; }
.site-head { position: relative; display: flex; align-items: flex-end; background: #545454; padding: 16px 132px 0 130px; }
.waves { position: absolute; right: 0; top: 0; width: 58%; height: 100%; }
.logo { position: relative; flex: none; width: 184px; padding-bottom: 13px; display: flex; flex-direction: column; font-family: "Liberation Serif", serif; color: #f2f2f2; white-space: nowrap; }
.logo-top { display: flex; justify-content: space-between; align-items: flex-end; padding-right: 1px; margin-bottom: 4px; }
.word { font-size: 38px; line-height: 38px; margin-bottom: -6px; }
.irish { font-size: 15px; line-height: 17px; }
.english { font-size: 15px; line-height: 17px; color: #b5b5b5; }
.main-nav { position: relative; display: flex; gap: 17px; margin: 0 0 -3px 32px; font-size: 17px; font-weight: 700; color: #fff; }
.main-nav a { height: 61px; padding: 0 21px; line-height: 60px; border-radius: 6px 6px 0 0; border-top: 2px solid #838383; background: linear-gradient(#676767, #515151 70%); box-shadow: 0 0 0 1px #4a4a4a; white-space: nowrap; }
.main-nav .current { margin-right: -3px; color: #5d5d5d; border-top-color: #fff; background: linear-gradient(#fff 40%, #ededed); box-shadow: none; }
.account { position: relative; margin: 0 0 37px auto; display: flex; flex-direction: column; align-items: flex-end; gap: 7px; font-size: 15px; line-height: 22px; color: #d2d2d2; }
.links { display: flex; font-weight: 700; }
.links > * + * { margin-left: 12px; padding-left: 12px; border-left: 1px solid #3f3f3f; }
.user { display: flex; align-items: center; gap: 6px; font-weight: 400; color: #f0f0f0; }
main { width: 59.9%; margin: 0 auto; padding-top: 21px; }
.notice { padding-right: 19px; text-align: right; font-size: 19px; line-height: 24px; color: #808080; }
.service-bar { display: flex; align-items: stretch; height: 64px; margin: 17px 0 32px; background: #595959; color: #fff; font-size: 25px; }
.service-bar h2 { flex: 1; padding-left: 13px; font-size: 25px; font-weight: 400; line-height: 64px; }
.add { width: 251px; gap: 10px; justify-content: flex-end; padding-right: 24px; background: #747474; }
.fold { width: 115px; }
.card { display: block; width: 498px; padding-left: 16px; line-height: 66px; font-size: 22px; color: #777; background: #fff; }
```
